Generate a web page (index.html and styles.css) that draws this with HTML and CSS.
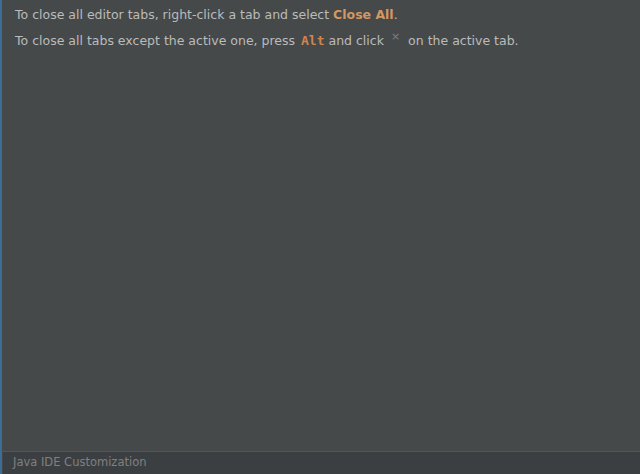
FILE: index.html
```html
<!DOCTYPE html>
<html>
<head>
<meta charset="utf-8">
<link rel="stylesheet" href="styles.css">
</head>
<body>
<div class="frame">
  <main class="content">
    <p class="tip">To close all editor tabs, right-click a tab and select <b class="hl">Close All</b>.</p>
    <p class="tip">To close all tabs except the active one, press <code class="key">Alt</code> and click <span class="x">&#215;</span> on the active tab.</p>
  </main>
  <footer class="footer">Java IDE Customization</footer>
</div>
</body>
</html>
```
FILE: styles.css
```css
html, body {
  margin: 0;
  padding: 0;
  width: 640px;
  height: 474px;
  overflow: hidden;
  background: #45494a;
}
.frame {
  display: flex;
  flex-direction: column;
  height: 474px;
  border-left: 2px solid #3c6c98;
  box-sizing: border-box;
  padding-left: 1px;
}
.content {
  flex: 1;
  padding: 7px 0 0 12px;
  font-family: "DejaVu Sans", sans-serif;
  font-size: 12.5px;
  color: #bbbbbb;
}
.tip {
  margin: 0 0 10px 0;
  line-height: 16px;
}
.hl {
  color: #d59660;
  font-weight: bold;
}
.key {
  font-family: "DejaVu Sans Mono", monospace;
  font-weight: bold;
  color: #d0844e;
  font-size: 13px;
  padding-left: 2px;
}
.x {
  color: #7c7f80;
  font-size: 11px;
  position: relative;
  top: -5px;
  padding: 0 4px 0 3px;
}
.footer {
  height: 22px;
  border-top: 1px solid #515658;
  background: #3c3f41;
  color: #7e8082;
  font-family: "DejaVu Sans", sans-serif;
  font-size: 11.5px;
  padding-left: 10px;
  line-height: 20px;
}
```
